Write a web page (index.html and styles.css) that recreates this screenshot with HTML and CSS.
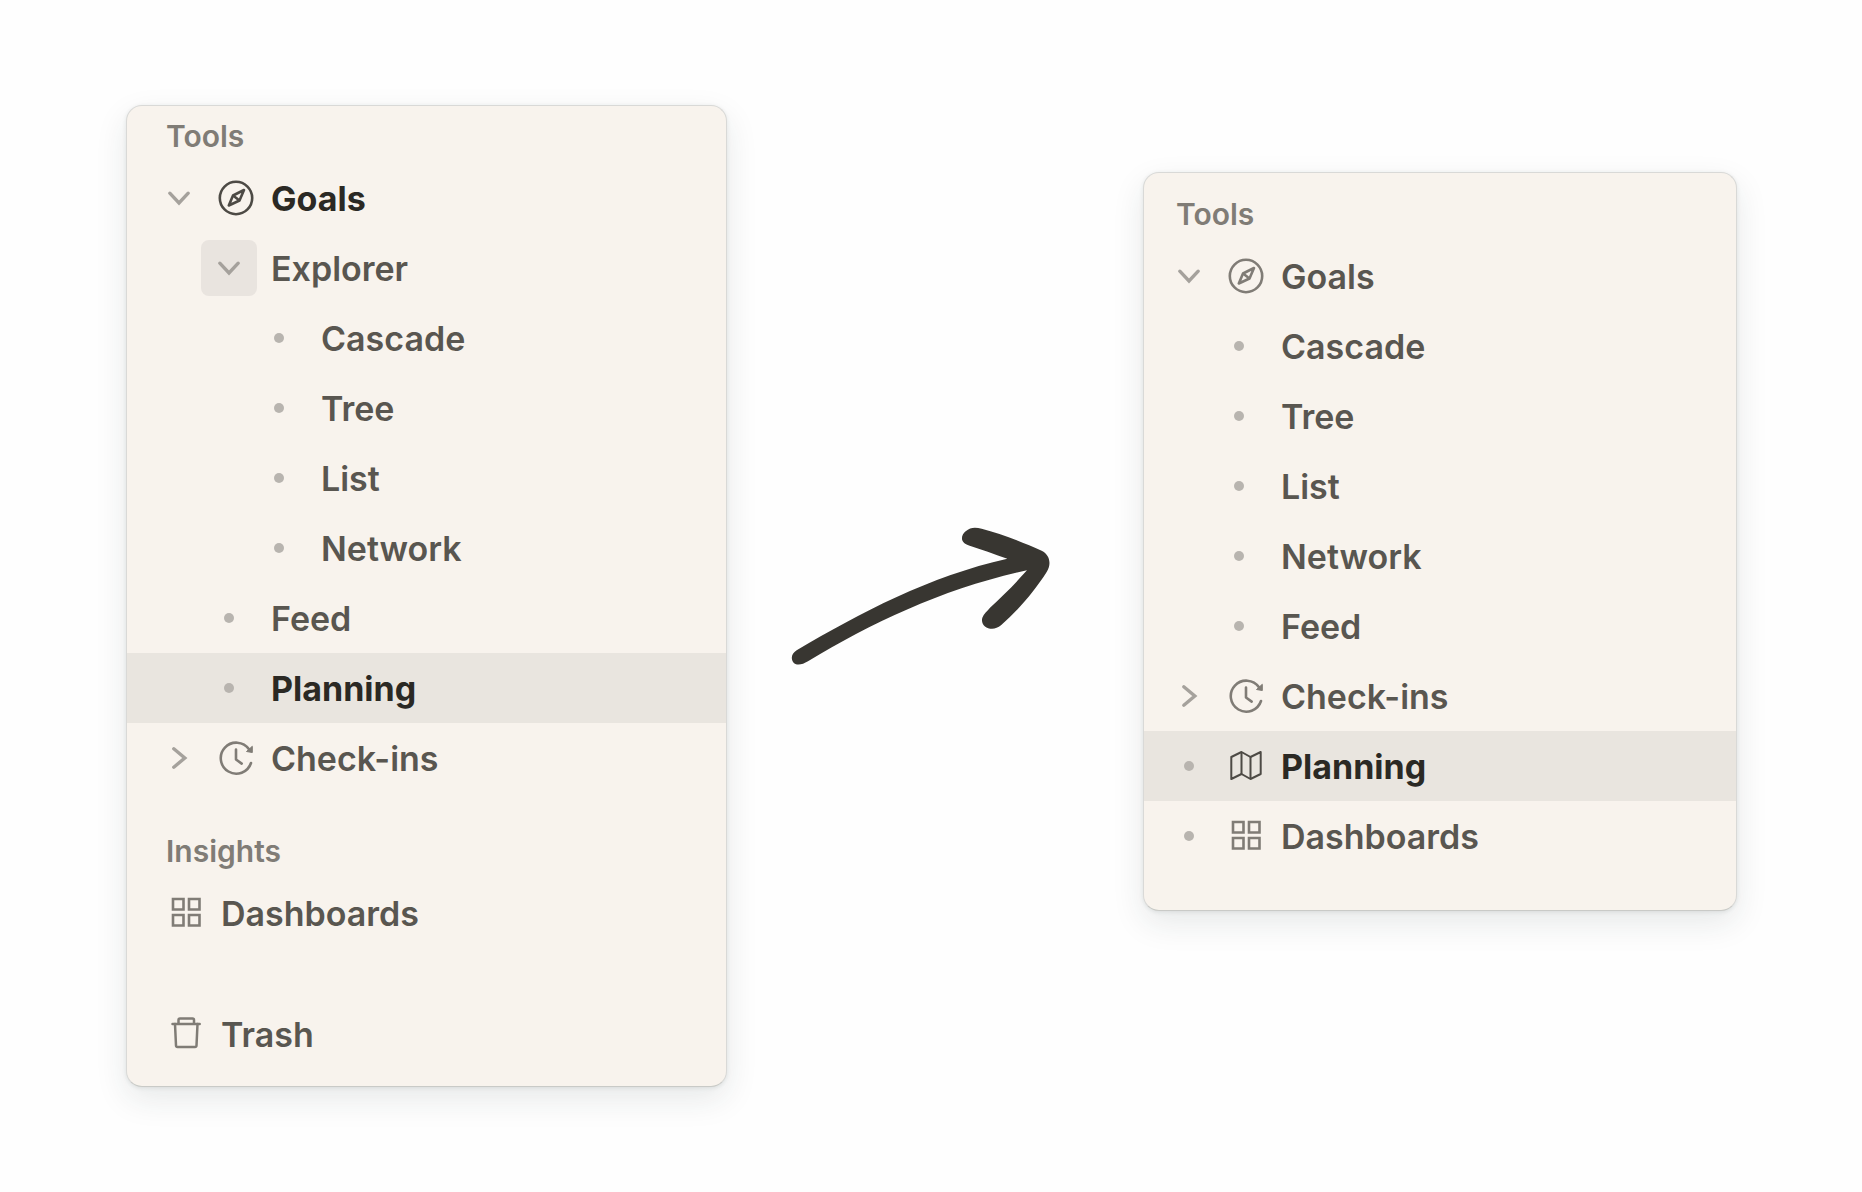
FILE: index.html
```html
<!DOCTYPE html>
<html lang="en">

<head>
  <meta charset="UTF-8">
  <title>Sidebar navigation</title>
  <link rel="stylesheet" href="styles.css">
</head>

<body>

  <!-- shared icons -->
  <svg class="sprite" aria-hidden="true">
    <symbol id="chevron-down" viewBox="0 0 24 24">
      <path d="M2.8 7.2 12 17l9.2-9.8" fill="none" stroke="currentColor" stroke-width="3.4" stroke-linecap="round"/>
    </symbol>
    <symbol id="chevron-right" viewBox="0 0 24 24">
      <path d="M6.800 2.800 17.800 12l-11 9.200" fill="none" stroke="currentColor" stroke-width="3.4" stroke-linecap="round"/>
    </symbol>
    <symbol id="compass" viewBox="0 0 36 36">
      <g fill="none" stroke="currentColor" stroke-width="2.6" stroke-linejoin="round">
        <circle cx="18" cy="18" r="16.2"/>
        <path d="M26 10 21.5 20.5 10.800 25.5 15 15.5Z"/>
        <path d="M15 15.5 21.5 20.5"/>
      </g>
    </symbol>
    <symbol id="clock" viewBox="0 0 36 36">
      <g fill="none" stroke="currentColor" stroke-width="2.6" stroke-linecap="round" stroke-linejoin="round">
        <path d="M33 23A15.5 15.5 0 1 1 31 9.3"/>
        <path d="M18 9.5V19.5L23.7 23.6"/>
      </g>
      <path d="M34.300 6.300V12.500L28.500 11.500Z" fill="currentColor" stroke="currentColor" stroke-linejoin="round"/>
    </symbol>
    <symbol id="map" viewBox="0 0 36 36">
      <g fill="none" stroke="currentColor" stroke-width="2" stroke-linejoin="round">
        <path d="M3.300 9 13.500 4 22.5 9 32.700 4V26L22.5 31 13.500 26 3.300 31Z"/>
        <path d="M13.500 4V26M22.5 9V31"/>
      </g>
    </symbol>
    <symbol id="grid" viewBox="0 0 36 36">
      <path d="M5 4h10.500v10.500H5zM21 4h10.500v10.500H21zM5 20h10.500v10.500H5zM21 20h10.500v10.500H21z" fill="none" stroke="currentColor" stroke-width="2.6"/>
    </symbol>
    <symbol id="trash" viewBox="0 0 36 36">
      <g fill="none" stroke="currentColor" stroke-width="2.5" stroke-linecap="round" stroke-linejoin="round">
        <path d="M4.500 8H31.700"/>
        <path d="M10.500 7.500V4Q10.500 2.500 12 2.500H24.500Q26 2.500 26 4V7.500"/>
        <path d="M7 8 8 29.500Q8.100 31 9.500 31H27Q28.400 31 28.500 29.500L29.500 8"/>
      </g>
    </symbol>
  </svg>

  <main class="comparison">
    <nav class="sidebar before" aria-label="Before">
      <h2>Tools</h2>
      <ul>
        <li class="row current">
          <button class="toggle" aria-label="Collapse Goals"><svg class="chevron"><use href="#chevron-down"/></svg></button>
          <svg class="icon"><use href="#compass"/></svg>
          <a href="#">Goals</a>
        </li>
        <li class="row level-1">
          <button class="toggle hovered" aria-label="Collapse Explorer"><svg class="chevron"><use href="#chevron-down"/></svg></button>
          <a href="#">Explorer</a>
        </li>
        <li class="row level-2"><span class="bullet"></span><a href="#">Cascade</a></li>
        <li class="row level-2"><span class="bullet"></span><a href="#">Tree</a></li>
        <li class="row level-2"><span class="bullet"></span><a href="#">List</a></li>
        <li class="row level-2"><span class="bullet"></span><a href="#">Network</a></li>
        <li class="row level-1"><span class="bullet"></span><a href="#">Feed</a></li>
        <li class="row level-1 current selected"><span class="bullet"></span><a href="#">Planning</a></li>
        <li class="row">
          <button class="toggle" aria-label="Expand Check-ins"><svg class="chevron"><use href="#chevron-right"/></svg></button>
          <svg class="icon"><use href="#clock"/></svg>
          <a href="#">Check-ins</a>
        </li>
      </ul>

      <h2 class="insights">Insights</h2>
      <ul>
        <li class="row flat">
          <svg class="icon"><use href="#grid"/></svg>
          <a href="#">Dashboards</a>
        </li>
      </ul>

      <ul class="bottom">
        <li class="row flat">
          <svg class="icon"><use href="#trash"/></svg>
          <a href="#">Trash</a>
        </li>
      </ul>
    </nav>

    <svg class="arrow" viewBox="0 0 900 570" aria-hidden="true">
      <path d="M80 448C270 335 480 225 712 173C670 158 635 145 599 134C570 126 571 105 587 91C602 77 618 79 635 83C692 97 760 125 815 149C840 161 845 190 830 213C795 268 745 328 693 373C667 395 629 378 637 350C641 338 652 330 660 320C700 284 740 243 771 208C530 260 310 362 114 481C96 492 78 495 69 483C62 472 65 457 80 448Z" fill="#383631"/>
    </svg>

    <nav class="sidebar after" aria-label="After">
      <h2>Tools</h2>
      <ul>
        <li class="row">
          <button class="toggle" aria-label="Collapse Goals"><svg class="chevron"><use href="#chevron-down"/></svg></button>
          <svg class="icon"><use href="#compass"/></svg>
          <a href="#">Goals</a>
        </li>
        <li class="row level-1"><span class="bullet"></span><a href="#">Cascade</a></li>
        <li class="row level-1"><span class="bullet"></span><a href="#">Tree</a></li>
        <li class="row level-1"><span class="bullet"></span><a href="#">List</a></li>
        <li class="row level-1"><span class="bullet"></span><a href="#">Network</a></li>
        <li class="row level-1"><span class="bullet"></span><a href="#">Feed</a></li>
        <li class="row">
          <button class="toggle" aria-label="Expand Check-ins"><svg class="chevron"><use href="#chevron-right"/></svg></button>
          <svg class="icon"><use href="#clock"/></svg>
          <a href="#">Check-ins</a>
        </li>
        <li class="row current selected">
          <span class="bullet"></span>
          <svg class="icon"><use href="#map"/></svg>
          <a href="#">Planning</a>
        </li>
        <li class="row">
          <span class="bullet"></span>
          <svg class="icon"><use href="#grid"/></svg>
          <a href="#">Dashboards</a>
        </li>
      </ul>
    </nav>
  </main>

</body>
</html>
```

FILE: styles.css
```css
* { box-sizing: border-box; }
body { margin: 0; background: #fefefe; font-family: Inter, "Liberation Sans", sans-serif; }
ul { list-style: none; margin: 0; padding: 0; }
.sprite { display: none; }

.comparison { display: grid; grid-template-columns: 601fr 416fr 594fr; align-items: start; padding: 105px 125px 105px 126px; }

.sidebar { background: #f8f3ed; border: 1px solid #d9d9d7; border-bottom-color: #c9cac7; border-radius: 16px; box-shadow: 0 12px 32px rgba(30,45,50,0.1), 0 1px 4px rgba(30,45,50,0.1); }
.before { --inset: 24px; padding: 3px 0 17px; }
.after { --inset: 17px; margin-top: 67px; padding: 14px 0 39px; }

h2 { margin: 0; padding-left: calc(var(--inset) + 15px); font-size: 30px; font-weight: 600; line-height: 54px; color: #807c76; }
.insights { margin-top: 31px; }
.bottom { margin-top: 51px; }

.row { display: flex; align-items: center; height: 70px; padding-left: var(--inset); color: #807c76; }
.row a { padding-top: 2px; color: #595650; font-size: 34px; font-weight: 560; line-height: 40px; text-decoration: none; }
.level-1 { padding-left: calc(var(--inset) + 50px); }
.level-2 { padding-left: calc(var(--inset) + 100px); }
.flat { padding-left: calc(var(--inset) + 20px); }
.current { color: #4d4a45; }
.current a { color: #2b2924; font-weight: 650; }
.selected { background: #e9e5df; }

.toggle { display: flex; align-items: center; justify-content: center; width: 56px; height: 56px; margin-right: 14px; padding: 0; border: 0; border-radius: 8px; background: none; color: #a5a19c; cursor: pointer; }
.toggle:hover, .hovered { background: #e9e4df; }
.chevron { width: 24px; height: 24px; }
.bullet { display: flex; justify-content: center; width: 56px; margin-right: 14px; }
.bullet::before { content: ""; width: 10px; height: 10px; border-radius: 50%; background: #b8b4af; }
.icon { width: 36px; height: 36px; margin: 0 17px 0 -3px; }

.arrow { width: 300px; height: 190px; margin-left: 43px; align-self: center; }
```
